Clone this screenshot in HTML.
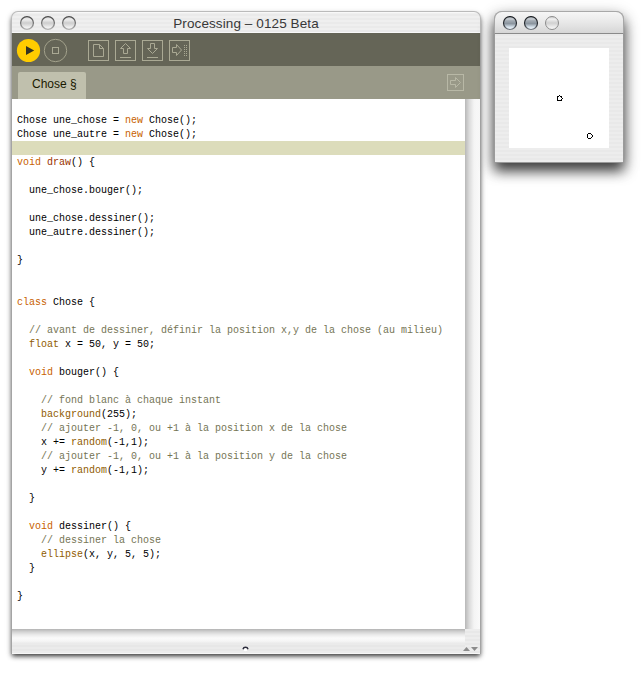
<!DOCTYPE html>
<html><head><meta charset="utf-8">
<style>
html,body{margin:0;padding:0;background:#fff;width:641px;height:679px;overflow:hidden;position:relative;font-family:"Liberation Sans",sans-serif;}
.abs{position:absolute;}
/* main window */
#win{left:11px;top:11px;width:470px;height:643px;border-radius:7px 7px 0 0;box-shadow:0 3px 5px -1px rgba(0,0,0,0.8),0 2px 8px -1px rgba(0,0,0,0.12);background:#e8e8e8;}
#title{left:11px;top:11px;width:470px;height:22px;border-radius:7px 7px 0 0;box-sizing:border-box;
 border:1px solid #bababa;border-bottom:none;
 background:linear-gradient(#f8f8f8 0px,#f8f8f8 1px,transparent 1px,transparent 20px,#f8f8f8 20px),repeating-linear-gradient(#efefef 0px,#efefef 2px,#eaeaea 2px,#eaeaea 4px);}
#titletxt{left:11px;top:16px;width:470px;text-align:center;font-size:13.5px;letter-spacing:0.1px;color:#383838;line-height:16px;}
.tl{position:absolute;width:14px;height:14px;border-radius:50%;box-sizing:border-box;
 background:linear-gradient(#e8e8e8 0%,#f2f2f2 20%,#d2d2d2 50%,#e6e6e6 75%,#fafafa 100%);
 border:1px solid #7a7a7a;border-bottom-color:#a8a8a8;box-shadow:inset 0 1px 1px rgba(0,0,0,0.25),0 1px 0 rgba(255,255,255,0.8);}
#toolbar{left:12px;top:33px;width:468px;height:33px;background:#656557;}
#tabbar{left:12px;top:66px;width:468px;height:33px;background:#999988;}
#tab{left:18px;top:72px;width:68px;height:27px;background:#c0c0ad;border-radius:2px 2px 0 0;}
#tabtxt{left:32px;top:77px;font-size:12px;color:#1a1a00;line-height:14px;}
#editor{left:12px;top:99px;width:453px;height:530px;background:#fff;overflow:hidden;}
#hl{left:12px;top:141px;width:453px;height:14px;background:#dcdcbb;}
#code{left:17px;top:114px;font-family:"Liberation Mono",monospace;font-size:10px;line-height:14px;white-space:pre;color:#000;margin:0;}
.k1{color:#c85f00}.k2{color:#905c00}.k3{color:#993300}.c{color:#757555}
#vscroll{left:465px;top:99px;width:15px;height:530px;background:linear-gradient(90deg,#b8b8b8 0%,#dcdcdc 30%,#f4f4f4 60%,#fafafa 100%);}
#hscroll{left:12px;top:629px;width:453px;height:14px;background:linear-gradient(#b4b4b4 0px,#d4d4d4 3px,#ececec 6px,#fafafa 9px,#f6f6f6 12px,#ececec 14px);}
#status{left:12px;top:643px;width:468px;height:11px;background:repeating-linear-gradient(#ebebeb 0px,#ebebeb 2px,#e7e7e7 2px,#e7e7e7 4px);}
#corner{left:465px;top:629px;width:15px;height:24px;background:repeating-linear-gradient(#ededed 0px,#ededed 2px,#e8e8e8 2px,#e8e8e8 4px);}
#lborder{left:11px;top:33px;width:1px;height:621px;background:#a4a4a4;}
#rborder{left:480px;top:33px;width:1px;height:621px;background:#a4a4a4;}
#bborder{left:12px;top:653px;width:468px;height:1px;background:#f6f6f6;}
/* small window */
#win2{left:494px;top:11px;width:130px;height:152px;border-radius:8px 8px 0 0;box-shadow:0 8px 13px rgba(0,0,0,0.72),0 4px 18px rgba(0,0,0,0.2);box-sizing:border-box;border:1px solid #9a9a9a;border-top-color:#b0b0b0;
 background:repeating-linear-gradient(#ededed 0px,#ededed 2px,#e9e9e9 2px,#e9e9e9 4px);}
#title2{left:494px;top:11px;width:130px;height:23px;border-radius:8px 8px 0 0;
 background:linear-gradient(#f6f6f6,#e8e8e8 50%,#d6d6d6);border:1px solid #a8a8a8;border-bottom:1px solid #8a8a8a;box-sizing:border-box;}
.tl2{position:absolute;width:13px;height:13px;border-radius:50%;
 background:radial-gradient(circle at 50% 75%,#e6eef6 0%,#9aa8b8 40%,#55606e 75%,#3a4450 100%);
 border:1px solid #4a5560;}
#canvas{left:509px;top:48px;width:100px;height:100px;background:#fff;}
.ell{position:absolute;width:5px;height:5px;border:1px solid #000;border-radius:50%;background:#fff;}
</style></head><body>
<div id="win" class="abs"></div>
<div id="title" class="abs"></div>
<div id="titletxt" class="abs">Processing – 0125 Beta</div>
<svg class="abs" style="left:11px;top:11px" width="80" height="22">
 <defs>
  <linearGradient id="tg" x1="0" y1="0" x2="0" y2="1">
   <stop offset="0" stop-color="#d8d8d8"/>
   <stop offset="0.25" stop-color="#ececec"/>
   <stop offset="0.5" stop-color="#cdcdcd"/>
   <stop offset="0.8" stop-color="#ebebeb"/>
   <stop offset="1" stop-color="#fbfbfb"/>
  </linearGradient>
  <linearGradient id="ts" x1="0" y1="0" x2="0" y2="1">
   <stop offset="0" stop-color="#4a4a4a"/>
   <stop offset="0.5" stop-color="#6e6e6e"/>
   <stop offset="1" stop-color="#b4b4b4"/>
  </linearGradient>
 </defs>
 <circle cx="16" cy="12" r="6.4" fill="url(#tg)" stroke="url(#ts)" stroke-width="1.2"/>
 <circle cx="37" cy="12" r="6.4" fill="url(#tg)" stroke="url(#ts)" stroke-width="1.2"/>
 <circle cx="58" cy="12" r="6.4" fill="url(#tg)" stroke="url(#ts)" stroke-width="1.2"/>
</svg>
<div id="toolbar" class="abs">
 <svg width="468" height="33" style="position:absolute;left:0;top:0">
  <circle cx="16.5" cy="17.5" r="11.6" fill="#ffcc00"/>
  <path d="M14 13 L22.2 17.5 L14 22 Z" fill="#333322"/>
  <circle cx="43.5" cy="17.5" r="11.2" fill="none" stroke="#a2a18b" stroke-width="1"/>
  <rect x="40.5" y="14.5" width="6" height="6" fill="none" stroke="#aaa994"/>
  <g fill="none" stroke="#aaa994" stroke-width="1">
   <rect x="76.5" y="7.5" width="20" height="20"/>
   <path d="M81.5 11.5 H87.5 L91.5 15.5 V23.5 H81.5 Z M87.5 11.5 V15.5 H91.5"/>
   <rect x="103.5" y="7.5" width="20" height="20"/>
   <path d="M113.5 10.5 L118.5 15.5 H115.5 V20.5 H111.5 V15.5 H108.5 Z M108 24.5 H119"/>
   <rect x="130.5" y="7.5" width="20" height="20"/>
   <path d="M138.5 10.5 H142.5 V15.5 H145.5 L140.5 20.5 L135.5 15.5 H138.5 Z M135 24.5 H146"/>
   <rect x="157.5" y="7.5" width="20" height="20"/>
   <path d="M160.5 14.5 H164.5 V11.5 L169.5 17 L164.5 22.5 V19.5 H160.5 Z"/>
  </g>
  <g fill="#aaa994">
   <rect x="172" y="12" width="1" height="1"/><rect x="174" y="12" width="1" height="1"/>
   <rect x="172" y="14" width="1" height="1"/><rect x="174" y="14" width="1" height="1"/>
   <rect x="172" y="16" width="1" height="1"/><rect x="174" y="16" width="1" height="1"/>
   <rect x="172" y="18" width="1" height="1"/><rect x="174" y="18" width="1" height="1"/>
   <rect x="172" y="20" width="1" height="1"/><rect x="174" y="20" width="1" height="1"/>
   <rect x="172" y="22" width="1" height="1"/><rect x="174" y="22" width="1" height="1"/>
  </g>
 </svg>
</div>
<div id="tabbar" class="abs">
 <svg width="468" height="33" style="position:absolute;left:0;top:0">
  <g fill="none" stroke="#b8b8a6" stroke-width="1">
   <rect x="435.5" y="8.5" width="16" height="16"/>
   <path d="M438.5 14.5 h5 v-3 l5 5 l-5 5 v-3 h-5 z"/>
  </g>
 </svg>
</div>
<div id="tab" class="abs"></div>
<div id="tabtxt" class="abs">Chose §</div>
<div id="editor" class="abs"></div>
<div id="hl" class="abs"></div>
<pre id="code" class="abs">Chose une_chose = <span class="k1">new</span> Chose();
Chose une_autre = <span class="k1">new</span> Chose();

<span class="k1">void</span> <span class="k3">draw</span>() {

  une_chose.bouger();

  une_chose.dessiner();
  une_autre.dessiner();

}


<span class="k1">class</span> Chose {

  <span class="c">// avant de dessiner, définir la position x,y de la chose (au milieu)</span>
  <span class="k2">float</span> x = 50, y = 50;

  <span class="k1">void</span> bouger() {

    <span class="c">// fond blanc à chaque instant</span>
    <span class="k2">background</span>(255);
    <span class="c">// ajouter -1, 0, ou +1 à la position x de la chose</span>
    x += <span class="k2">random</span>(-1,1);
    <span class="c">// ajouter -1, 0, ou +1 à la position y de la chose</span>
    y += <span class="k2">random</span>(-1,1);

  }

  <span class="k1">void</span> dessiner() {
    <span class="c">// dessiner la chose</span>
    <span class="k2">ellipse</span>(x, y, 5, 5);
  }

}</pre>
<div id="vscroll" class="abs"></div>
<div id="hscroll" class="abs"></div>
<div id="status" class="abs"></div>
<div id="corner" class="abs"></div>
<svg class="abs" style="left:460px;top:644px" width="20" height="9"><path d="M3 7 L10 7 L6.5 3 Z" fill="#8c8c8c"/><path d="M11 3 L18 3 L14.5 7 Z" fill="#8c8c8c"/></svg>
<svg class="abs" style="left:240px;top:643px" width="11" height="10"><circle cx="5.5" cy="6" r="2.2" fill="#fff"/><path d="M3 6.2 A2.6 2.6 0 0 1 8 6.2" fill="none" stroke="#2a2a3a" stroke-width="1.5"/></svg>
<div id="lborder" class="abs"></div>
<div id="rborder" class="abs"></div>
<div id="bborder" class="abs"></div>

<div id="win2" class="abs"></div>
<div id="title2" class="abs"></div>
<svg class="abs" style="left:494px;top:11px" width="130" height="22">
 <defs>
  <linearGradient id="gr" x1="0" y1="0" x2="0" y2="1">
   <stop offset="0" stop-color="#6e767e"/>
   <stop offset="0.18" stop-color="#cdd2d7"/>
   <stop offset="0.32" stop-color="#a4acb4"/>
   <stop offset="0.55" stop-color="#8a949e"/>
   <stop offset="0.8" stop-color="#d4e0ea"/>
   <stop offset="1" stop-color="#f6fbff"/>
  </linearGradient>
  <linearGradient id="grs" x1="0" y1="0" x2="0" y2="1">
   <stop offset="0" stop-color="#15181c"/>
   <stop offset="0.6" stop-color="#2c3036"/>
   <stop offset="1" stop-color="#70767e"/>
  </linearGradient>
  <linearGradient id="gy" x1="0" y1="0" x2="0" y2="1">
   <stop offset="0" stop-color="#c8c8c8"/>
   <stop offset="0.2" stop-color="#f0f0f0"/>
   <stop offset="0.5" stop-color="#d0d0d0"/>
   <stop offset="0.8" stop-color="#ececec"/>
   <stop offset="1" stop-color="#fafafa"/>
  </linearGradient>
 </defs>
 <circle cx="16" cy="12" r="6.5" fill="url(#gr)" stroke="url(#grs)" stroke-width="1.2"/>
 <circle cx="37" cy="12" r="6.5" fill="url(#gr)" stroke="url(#grs)" stroke-width="1.2"/>
 <circle cx="58" cy="12" r="6.5" fill="url(#gy)" stroke="#8c8c8c" stroke-width="1"/>
</svg>
<div id="canvas" class="abs"></div>
<svg class="abs" style="left:509px;top:48px" width="100" height="100" shape-rendering="crispEdges"><g fill="#000"><rect x="50" y="47" width="1" height="1"/><rect x="48" y="48" width="1" height="1"/><rect x="49" y="48" width="1" height="1"/><rect x="51" y="48" width="1" height="1"/><rect x="52" y="48" width="1" height="1"/><rect x="48" y="49" width="1" height="1"/><rect x="52" y="49" width="1" height="1"/><rect x="48" y="50" width="1" height="1"/><rect x="53" y="50" width="1" height="1"/><rect x="48" y="51" width="1" height="1"/><rect x="52" y="51" width="1" height="1"/><rect x="48" y="52" width="1" height="1"/><rect x="49" y="52" width="1" height="1"/><rect x="50" y="52" width="1" height="1"/><rect x="51" y="52" width="1" height="1"/><rect x="52" y="52" width="1" height="1"/><rect x="79" y="85" width="1" height="1"/><rect x="80" y="85" width="1" height="1"/><rect x="81" y="85" width="1" height="1"/><rect x="78" y="86" width="1" height="1"/><rect x="82" y="86" width="1" height="1"/><rect x="78" y="87" width="1" height="1"/><rect x="83" y="87" width="1" height="1"/><rect x="78" y="88" width="1" height="1"/><rect x="83" y="88" width="1" height="1"/><rect x="78" y="89" width="1" height="1"/><rect x="82" y="89" width="1" height="1"/><rect x="79" y="90" width="1" height="1"/><rect x="80" y="90" width="1" height="1"/><rect x="81" y="90" width="1" height="1"/></g></svg>
</body></html>
